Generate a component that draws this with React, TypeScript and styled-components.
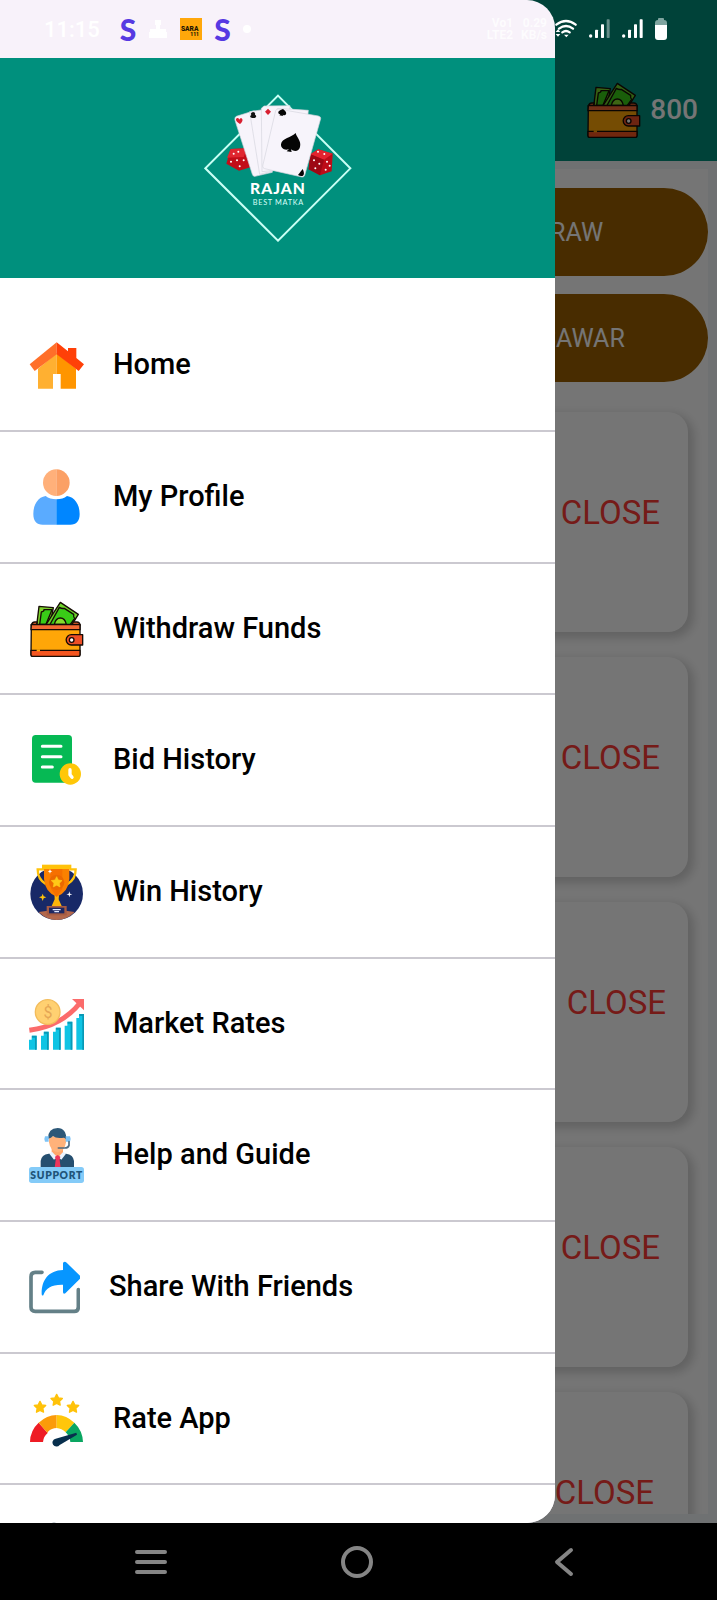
import React from "react";
import styled, { createGlobalStyle } from "styled-components";

const GlobalStyle = createGlobalStyle`
  *, *::before, *::after { box-sizing: border-box; }
  body { margin: 0; background: #000; font-family: Roboto, "Liberation Sans", sans-serif; }
  ul { list-style: none; margin: 0; padding: 0; }
  button { border: 0; padding: 0; margin: 0; background: none; font: inherit; color: inherit; }
  svg { display: block; flex: none; }
`;

const Device = styled.div`
  display: flex;
  flex-direction: column;
  height: 100vh;
`;

const Screen = styled.div`
  position: relative;
  flex: 1;
  min-height: 0;
  overflow: hidden;
  display: flex;
  flex-direction: column;
  background: #f2f6f9;
`;

const AppBar = styled.header`
  flex: none;
  display: flex;
  align-items: center;
  justify-content: flex-end;
  gap: 9px;
  height: 161px;
  padding: 58px 19px 0 0;
  background: #00907d;
`;

const Balance = styled.span`
  font-size: 28px;
  font-weight: 500;
  color: #fff;
`;

const Content = styled.main`
  flex: 1;
  min-height: 0;
  overflow: hidden;
  margin: 8px 9px 9px;
  background: #fff;
`;

const Pills = styled.div`
  display: grid;
  grid-template-columns: 1fr 1fr;
  gap: 18px;
  padding-top: 19px;
`;

const Pill = styled.button`
  grid-column: 2;
  height: 88px;
  border-radius: 44px;
  background: #9d6000;
  color: #fff;
  font-size: 25px;
`;

const Cards = styled.div`
  display: flex;
  flex-direction: column;
  gap: 25px;
  padding: 30px 20px 0;
`;

const Card = styled.section<{ $inset: number }>`
  flex: none;
  display: flex;
  align-items: center;
  justify-content: flex-end;
  height: 220px;
  padding: 0 ${(p) => p.$inset}px 20px 0;
  border-radius: 20px;
  background: #fff;
  box-shadow: 4px 4px 10px 2px rgba(0, 0, 0, 0.17);
`;

const MarketState = styled.span`
  font-size: 33px;
  color: #ff3b36;
`;

const Scrim = styled.div`
  position: absolute;
  inset: 0;
  background: rgba(0, 0, 0, 0.54);
`;

const Drawer = styled.aside`
  position: absolute;
  inset: 0 auto 0 0;
  width: 555px;
  max-width: 80%;
  display: flex;
  flex-direction: column;
  overflow: hidden;
  padding-top: 58px;
  border-radius: 0 28px 28px 0;
  background: #f8f2fa;
`;

const Brand = styled.div`
  flex: none;
  display: flex;
  align-items: center;
  justify-content: center;
  height: 220px;
  background: #00907d;
`;

const Menu = styled.nav`
  flex: 1;
  min-height: 0;
  overflow: hidden auto;
  scrollbar-width: none;
  padding-top: 22px;
  background: #fff;
`;

const MenuItem = styled.li`
  height: 132px;
  padding: 37px 28px 0;
  border-bottom: 2px solid #cbc9d0;
  &:nth-child(3n) { height: 131px; }
`;

const MenuLink = styled.a`
  display: flex;
  align-items: center;
  gap: 29px;
  color: #000;
  text-decoration: none;
`;

const MenuLabel = styled.span`
  padding-bottom: 2px;
  font-size: 29px;
  font-weight: 500;
  white-space: nowrap;
`;

const StatusBar = styled.div`
  position: absolute;
  inset: 0 0 auto 0;
  display: flex;
  align-items: center;
  justify-content: space-between;
  height: 58px;
  padding: 0 50px 0 44px;
  color: #fff;
`;

const StatusGroup = styled.div<{ $gap?: number }>`
  display: flex;
  align-items: center;
  gap: ${(p) => p.$gap ?? 12}px;
`;

const Clock = styled.span`
  margin-right: 8px;
  font-size: 22px;
  font-weight: 500;
`;

const AppLetter = styled.span`
  font-family: Lato, sans-serif;
  font-size: 30px;
  line-height: 30px;
  font-weight: 900;
  color: #5639e2;
`;

const StackedText = styled.span`
  font-size: 12px;
  line-height: 12px;
  font-weight: 700;
  text-align: right;
  opacity: 0.8;
`;

const SystemNav = styled.nav`
  flex: none;
  display: flex;
  height: 77px;
  padding: 0 50px 0 48px;
  background: #000;
`;

const NavButton = styled.button`
  flex: 1;
  display: flex;
  align-items: center;
  justify-content: center;
  color: #858585;
`;

type IconProps = { box: string; width?: number; children: React.ReactNode };

const Icon = ({ box, width = 56, children }: IconProps) => (
  <svg width={width} height={56} viewBox={box} aria-hidden="true">
    {children}
  </svg>
);

const HomeIcon = () => (
  <Icon box="84 51 168 168">
    <path d="M170 100 114 146V206H159V162H170Z" fill="#ffb031" />
    <path d="M170 100 228 146V206H182V162H170Z" fill="#ff9500" />
    <path d="M170 67 89 133 104 153 170 103Z" fill="#ff6f29" />
    <path d="M170 67 204 94V84H229V114L252 133 236 153 170 103Z" fill="#ff4008" />
  </Icon>
);

const ProfileIcon = () => (
  <Icon box="84 447 168 168">
    <path d="M169 448a40 40 0 0 0 0 80Z" fill="#ffb07a" />
    <path d="M169 448a40 40 0 0 1 0 80Z" fill="#fba065" />
    <path d="M169 538q-20 0-32-10c-22 3-37 24-37 54 0 22 10 32 28 32h41Z" fill="#5aabff" />
    <path d="M169 538q20 0 32-10c22 3 38 24 38 54 0 22-10 32-28 32h-42Z" fill="#0086ff" />
  </Icon>
);

const WalletIcon = () => (
  <Icon box="84 60 168 168">
    <g stroke="#160b05" strokeWidth="4" strokeLinejoin="round" strokeLinecap="round">
      <path d="M117 76 160 80 150 134H110Z" fill="#7bd02a" />
      <path d="M124 93q9-2 8-7h24l-18 44h-19Z" fill="#39cc17" />
      <path d="M181 64 235 100 214 134H136Z" fill="#6ed32b" />
      <path d="M178 79q8 5 15 3l28 18q-1 9 3 12l-14 20h-61Z" fill="#39cc17" />
      <path d="M163 130q4-19 18-19t18 19Z" fill="#85dd2c" />
      <path d="M94 132q3-9 10-9h8l-3 9Zm126-9h11q8 0 9 9h-24Z" fill="#f4682f" />
      <path d="M94 130H238a2 2 0 0 1 2 2V221a5 5 0 0 1-5 5H98a5 5 0 0 1-5-5Z" fill="#ffa608" />
      <path d="M94 131H240V146H93Z" fill="#f36a32" />
      <path d="M93 208H240V221a5 5 0 0 1-5 5H98a5 5 0 0 1-5-5Z" fill="#f4551f" />
      <path d="M248 161V192H214a15 15 0 0 1 0-31Z" fill="#ee5027" />
      <circle cx="215" cy="177" r="7" fill="#fff" />
    </g>
    <path d="M110 208h10" stroke="#ffa608" strokeWidth="6" />
  </Icon>
);

const BidIcon = () => (
  <Icon box="84 456 168 168">
    <rect x="96" y="465" width="120" height="143" rx="11" fill="#06b954" />
    <path d="M127 499h56M127 530h56M127 561h30" stroke="#fff" strokeWidth="9" strokeLinecap="round" />
    <circle cx="211" cy="582" r="32" fill="#ffc708" />
    <path d="M210 569v15l6 8" stroke="#fff" strokeWidth="10" fill="none" strokeLinecap="round" strokeLinejoin="round" />
  </Icon>
);

const star = (cx: number, cy: number, r: number) =>
  Array.from({ length: 10 }, (_, i) => {
    const a = (Math.PI / 5) * i - Math.PI / 2;
    const d = i % 2 ? r * 0.5 : r;
    return `${cx + d * Math.cos(a)},${cy + d * Math.sin(a)}`;
  }).join(" ");

const TrophyIcon = () => (
  <Icon box="84 69 168 168">
    <circle cx="170" cy="158" r="79" fill="#182967" />
    <path d="M116 213q54-10 108 0-24 24-54 24t-54-24Z" fill="#b3684c" />
    <path d="M132 85h-19q0 30 24 44M208 85h19q0 30-24 44" fill="none" stroke="#ffc20a" strokeWidth="7" />
    <path d="M163 150h15l-2 25 9 20h-30l9-20Z" fill="#ffb50a" />
    <path d="M132 84H208V114q-3 40-38 53-35-13-38-53Z" fill="#fb8100" />
    <path d="M150 84h37v60l-17 23-17-23Z" fill="#f67000" />
    <path d="M126 71h88v13h-88Z" fill="#ffc20a" />
    <circle cx="170" cy="124" r="23" fill="#eb6900" />
    <polygon points={star(170, 124, 17)} fill="#ffc817" stroke="#ffc817" strokeWidth="2" />
    <path d="M140 195h60v28h-60Z" fill="#a65b43" />
    <path d="M147 200h46v17h-46Z" fill="#1c2762" />
    <path d="M158 206h24M163 212h14" stroke="#dfe7ff" strokeWidth="4" />
    <path d="m128 158 3 8 8 3-8 3-3 8-3-8-8-3 8-3Z" fill="#ffc20a" />
    <path d="m208 151 2 7 7 2-7 2-2 7-2-7-7-2 7-2ZM150 84l2 5 5 2-5 2-2 5-2-5-5-2 5-2Z" fill="#fff" />
  </Icon>
);

const RatesIcon = () => (
  <Icon box="84 465 168 168">
    <path d="M88 568Q185 555 240 486" fill="none" stroke="#fb6b6b" strokeWidth="15" />
    <path d="M216 474H252V508Z" fill="#fb6b6b" />
    <circle cx="143" cy="513" r="37" fill="#ffd071" stroke="#f3bc5b" strokeWidth="4" />
    <text x="144" y="530" textAnchor="middle" fontSize="48" fontFamily="Roboto, sans-serif" fill="#e5a655">$</text>
    {[
      [87, 584],
      [123, 572],
      [159, 560],
      [194, 542],
      [229, 519],
    ].map(([x, y]) => (
      <g key={x}>
        <path d={`M${x} ${y + 12}h8V${y}h15V626h-23Z`} fill="#0fc4e4" />
        <path d={`M${x + 9} ${y}h14V626h-5V${y + 6}h-9Z`} fill="#0899b6" />
      </g>
    ))}
  </Icon>
);

const SupportIcon = () => (
  <Icon box="84 78 168 168">
    <path d="M122 200v-20q2-19 24-22h52q22 3 24 22v20Z" fill="#264f70" />
    <path d="M155 140h34v24l-16 14-18-14Z" fill="#ffa66b" />
    <path d="M148 158l8-6 17 18 17-18 8 6-14 18-11-9-11 9Z" fill="#eaf3ff" />
    <path d="m165 167 8-5 8 5-2 10 3 23h-18l3-23Z" fill="#ef355c" />
    <path d="M147 106h51v18q-4 28-25 30-22-3-26-30Z" fill="#ffb27a" />
    <path d="M144 113q0-32 29-32 26 0 26 35-3-5-7-6-24 4-33-5-5 7-15 8Z" fill="#2d5878" />
    <path d="M146 106h-11q-4 8 0 16h11ZM197 106h13q4 8 0 16h-13Z" fill="#7ec4f7" />
    <path d="M207 122v11q-3 8-12 8h-20" fill="none" stroke="#4e6a80" strokeWidth="5" strokeLinecap="round" />
    <rect x="87" y="198" width="165" height="48" rx="8" fill="#84cbf8" />
    <text x="170" y="233" textAnchor="middle" fontSize="31" letterSpacing="2" fontWeight="800" fontFamily="Lato, sans-serif" fill="#1f5479">SUPPORT</text>
  </Icon>
);

const ShareIcon = () => (
  <Icon box="84 474 156 168" width={52}>
    <path d="M126 514h-20q-13 0-13 13v91q0 13 13 13h117q12 0 12-13v-52" fill="none" stroke="#648087" strokeWidth="11" strokeLinecap="round" />
    <path d="M194 482q-5 0-5 5v20c-44 1-65 32-64 72q0 6 5 4c7-22 25-33 59-32v22q0 7 7 4l44-44q4-4 0-9l-40-39q-3-3-6-3Z" fill="#0796ff" />
  </Icon>
);

const RateIcon = () => (
  <Icon box="84 147 168 168">
    {[
      [120, 196],
      [170, 175],
      [219, 196],
    ].map(([x, y]) => (
      <polygon key={x} points={star(x, y, 18)} fill="#ffc20a" stroke="#ffc20a" strokeWidth="4" strokeLinejoin="round" />
    ))}
    <path d="M90 300a80 80 0 0 1 26-58l27 31q-13 11-14 27Z" fill="#ee1c24" />
    <path d="M116 242q24-22 54-23v39q-15 0-26 11l-1 4Z" fill="#fb9b0a" />
    <path d="M170 219q30 1 53 23l-26 29q-12-12-27-13Z" fill="#ffc60a" />
    <path d="M223 242q25 24 26 58h-38q-1-17-14-29Z" fill="#0aa661" />
    <path d="m229 272 2 6-52 31a12 12 0 1 1-12-19Z" fill="#082f4d" />
  </Icon>
);

const ExitIcon = () => (
  <Icon box="84 543 168 168">
    <circle cx="162" cy="581" r="36" fill="#0a2440" />
  </Icon>
);

const Logo = () => (
  <svg width="148" height="148" viewBox="41 41 444 444" role="img" aria-label="Rajan Best Matka">
    <path d="M263 46 480 264 263 481 45 264Z" fill="none" stroke="#c9fff5" strokeWidth="6" />
    <g>
      <path d="m121 206 49-2 10 57-34 10-38-21Z" fill="#c20d18" />
      <path d="m121 206 49-2-10 26-50 2Z" fill="#e02630" />
      <path d="m360 222 24-15 43 13-3 53-35 12-34-18Z" fill="#bd0c18" />
      <path d="m360 222 24-15 43 13-26 18Z" fill="#e3242f" />
      <path d="m360 222 41 16-12 47-34-18Z" fill="#9d0814" />
      {[[130, 220], [144, 214], [122, 244], [140, 240], [160, 240], [148, 258], [383, 214], [402, 221], [371, 240], [387, 250], [375, 264], [410, 244], [418, 256], [406, 268]].map(([x, y]) => (
        <circle key={`${x}-${y}`} cx={x} cy={y} r="3" fill="#fff" />
      ))}
    </g>
    <g fill="#f7f4fb" stroke="#d5d5de" strokeWidth="2">
      <path d="m138 108 54-17 54 185-52 12q-6 1-8-6l-52-162q-2-9 4-12Z" />
      <path d="m178 94 60-9 10 187-40 10Z" />
      <path d="m213 84 8-7 78-1-10 190-74 8Z" />
      <path d="m262 84 92 6-20 190-110-20Z" />
      <path d="m264 86 120 21q8 2 7 8l-48 170q-2 6-8 5l-112-25q-7-2-6-8l39-166q2-6 8-5Z" />
    </g>
    <path d="M149 131c-24-14-5-25-2-13 4-11 18 0 2 13Z" fill="#d81f30" />
    <path d="m233 85 9 9-9 10-9-10Z" fill="#d81f30" />
    <path d="M188 95q-9 2-5 9-8 5 2 9h8q9-5 1-10 2-7-6-8Z" fill="#111" />
    <path d="M278 86q12 9 9 16-4 5-10 1l1 4-11-2 3-3q-9-1-5-9 5-5 13-7Z" fill="#050505" />
    <path d="M316 158c2 12 18 24 13 42-3 13-17 16-27 7l2 8-15-2 7-7c-12 6-25-2-24-14 2-19 32-20 44-34Z" fill="#050505" />
    <path d="m323 284 14-18q7 14 1 20-7 3-15-2Z" fill="#050505" />
    <text x="263" y="341" textAnchor="middle" fontFamily="Lato, sans-serif" fontWeight="900" fontSize="47" letterSpacing="3" fill="#fff">RAJAN</text>
    <text x="264" y="374" textAnchor="middle" fontFamily="Lato, sans-serif" fontSize="22" letterSpacing="2" fill="#d9fff8">BEST MATKA</text>
  </svg>
);

const Signal = ({ weak = false }: { weak?: boolean }) => (
  <svg width="21" height="22" viewBox="688 55 63 66" fill="#fff" aria-hidden="true">
    <circle cx="693" cy="109" r="5" />
    <rect x="706" y="90" width="9" height="25" rx="2" />
    <rect x="724" y="74" width="9" height="41" rx="2" />
    <rect x="741" y="59" width="9" height="56" rx="2" opacity={weak ? 0.4 : 1} />
  </svg>
);

const menu = [
  { label: "Home", icon: <HomeIcon /> },
  { label: "My Profile", icon: <ProfileIcon /> },
  { label: "Withdraw Funds", icon: <WalletIcon /> },
  { label: "Bid History", icon: <BidIcon /> },
  { label: "Win History", icon: <TrophyIcon /> },
  { label: "Market Rates", icon: <RatesIcon /> },
  { label: "Help and Guide", icon: <SupportIcon /> },
  { label: "Share With Friends", icon: <ShareIcon /> },
  { label: "Rate App", icon: <RateIcon /> },
];

const cardInsets = [28, 28, 22, 28, 34];

export default function App() {
  return (
    <Device>
      <GlobalStyle />
      <Screen>
        <AppBar>
          <WalletIcon />
          <Balance>800</Balance>
        </AppBar>
        <Content>
          <Pills>
            <Pill type="button">WITHDRAW</Pill>
            <Pill type="button">GALI DESAWAR</Pill>
          </Pills>
          <Cards>
            {cardInsets.map((inset, i) => (
              <Card key={i} $inset={inset}>
                <MarketState>CLOSE</MarketState>
              </Card>
            ))}
          </Cards>
        </Content>
        <Scrim />
        <Drawer>
          <Brand>
            <Logo />
          </Brand>
          <Menu>
            <ul>
              {menu.map((m) => (
                <MenuItem key={m.label}>
                  <MenuLink href="#">
                    {m.icon}
                    <MenuLabel>{m.label}</MenuLabel>
                  </MenuLink>
                </MenuItem>
              ))}
              <MenuItem>
                <ExitIcon />
              </MenuItem>
            </ul>
          </Menu>
        </Drawer>
        <StatusBar>
          <StatusGroup>
            <Clock>11:15</Clock>
            <AppLetter>S</AppLetter>
            <svg width="20" height="20" viewBox="0 0 20 20" fill="#fff" aria-hidden="true">
              <path d="M7 1h6v5h-1v4h6v3h1v6H1v-6h1v-3h6V6H7Z" />
            </svg>
            <svg width="22" height="22" viewBox="549 55 66 66" aria-hidden="true">
              <rect x="549" y="55" width="66" height="66" fill="#ffa70a" />
              <text x="578" y="93" textAnchor="middle" fontFamily="Roboto, sans-serif" fontWeight="900" fontSize="20" fill="#221503">SARA</text>
              <text x="593" y="109" textAnchor="middle" fontFamily="Roboto, sans-serif" fontWeight="900" fontSize="15" fill="#221503">111</text>
            </svg>
            <AppLetter>S</AppLetter>
            <svg width="8" height="8" viewBox="0 0 8 8" aria-hidden="true">
              <circle cx="4" cy="4" r="4" fill="#fff" />
            </svg>
          </StatusGroup>
          <StatusGroup>
            <StatusGroup $gap={8}>
              <StackedText>Vo1<br />LTE2</StackedText>
              <StackedText>0.29<br />KB/s</StackedText>
              <svg width="22" height="22" viewBox="588 55 66 66" fill="none" stroke="#fff" strokeWidth="7" aria-hidden="true">
                <path d="M592 75q29-22 58 0M600 87q21-16 42 0M610 98q11-8 22 0" strokeLinecap="round" />
                <path d="m615 105h14l-7 8ZM590 97l7-8 7 8ZM590 103h14l-7 8Z" fill="#fff" stroke="none" />
              </svg>
            </StatusGroup>
            <Signal weak />
            <Signal />
            <svg width="12" height="22" viewBox="0 0 12 22" aria-hidden="true">
              <path d="M3 2V1q0-1 1-1h4q1 0 1 1v1q3 0 3 3v3H0V5q0-3 3-3Z" fill="#7fa49f" />
              <path d="M0 7h12v12q0 3-3 3H3q-3 0-3-3Z" fill="#fff" />
            </svg>
          </StatusGroup>
        </StatusBar>
      </Screen>
      <SystemNav aria-label="System">
        <NavButton type="button" aria-label="Recent apps">
          <svg width="32" height="26" viewBox="0 0 32 26" stroke="currentColor" strokeWidth="4" strokeLinecap="round">
            <path d="M2 3h28M2 13h28M2 23h28" />
          </svg>
        </NavButton>
        <NavButton type="button" aria-label="Home screen">
          <svg width="32" height="32" viewBox="0 0 32 32" fill="none" stroke="currentColor" strokeWidth="4">
            <circle cx="16" cy="16" r="14" />
          </svg>
        </NavButton>
        <NavButton type="button" aria-label="Back">
          <svg width="20" height="30" viewBox="0 0 20 30" fill="none" stroke="currentColor" strokeWidth="4" strokeLinecap="round" strokeLinejoin="round">
            <path d="M17 3 3 15l14 12" />
          </svg>
        </NavButton>
      </SystemNav>
    </Device>
  );
}
